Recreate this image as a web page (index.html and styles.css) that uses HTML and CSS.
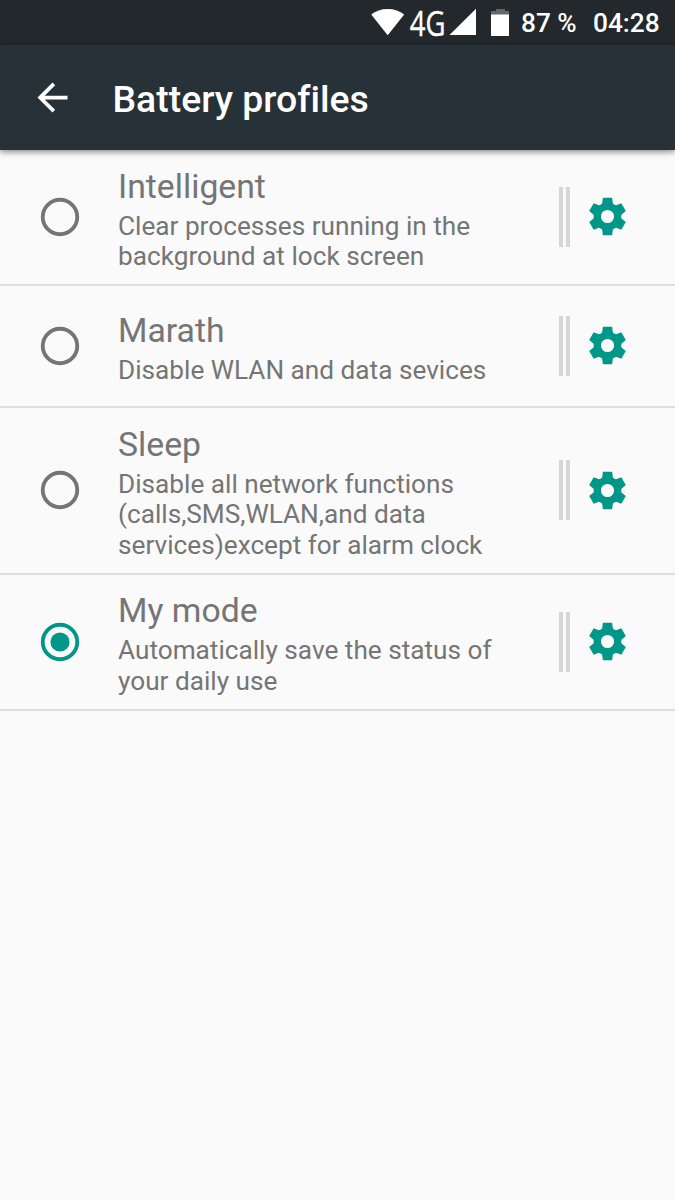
FILE: index.html
```html
<!DOCTYPE html>
<html lang="en">
<head>
    <meta charset="UTF-8">
    <meta name="viewport" content="width=device-width, initial-scale=1.0">
    <title>Battery profiles</title>
    <link rel="stylesheet" href="styles.css">
</head>
<body>
    <!-- Shared icons -->
    <svg class="icon-defs" width="0" height="0">
        <symbol id="gear" viewBox="-12 -12 24 24">
            <path fill-rule="evenodd" d="M-2.870-6.930L-2.450-10H2.450L2.870-6.930Q3.700-6.200 4.570-5.950L7.370-7.030 9.770-2.870 7.440-1Q7.200 0 7.440 1L9.770 2.870 7.370 7.030 4.570 5.950Q3.700 6.200 2.870 6.930L2.450 10H-2.450L-2.870 6.930Q-3.700 6.200-4.570 5.950L-7.370 7.030-9.770 2.870-7.440 1Q-7.200 0-7.440-1L-9.770-2.870-7.370-7.030-4.570-5.950Q-3.700-6.200-2.870-6.930ZM0-3.500A3.500 3.500 0 1 0 0 3.500A3.500 3.500 0 1 0 0-3.500Z"/>
        </symbol>
        <symbol id="radio-off" viewBox="0 0 24 24">
            <circle cx="12" cy="12" r="9" fill="none" stroke="currentColor" stroke-width="2"/>
        </symbol>
        <symbol id="radio-on" viewBox="0 0 24 24">
            <circle cx="12" cy="12" r="9" fill="none" stroke="currentColor" stroke-width="2"/>
            <circle cx="12" cy="12" r="5"/>
        </symbol>
    </svg>

    <div class="status-bar">
        <svg class="signal-icons" width="150" height="45" viewBox="0 0 150 45">
            <path d="M11.200 14.600Q18 9 27.700 9T44.200 14.600L27.700 35.300Z"/>
            <text class="network" transform="translate(49.800 35.500) scale(.785 1)">4G</text>
            <path d="M116 8.700V35H89.500Z"/>
            <path class="battery-empty" d="M136 9h9v2h4v4h-18v-4h5z"/>
            <path d="M131 14.500h18v21.500h-18z"/>
        </svg>
        <span class="battery">87 %</span>
        <span class="clock">04:28</span>
    </div>

    <div class="toolbar">
        <svg class="back" viewBox="0 0 24 24">
            <path d="M20 11H7.830l5.590-5.590L12 4l-8 8 8 8 1.410-1.410L7.830 13H20v-2z"/>
        </svg>
        <h1>Battery profiles</h1>
    </div>

    <div class="profiles">
        <div class="profile">
            <svg class="radio"><use href="#radio-off"/></svg>
            <div class="info">
                <div class="name">Intelligent</div>
                <div class="summary">Clear processes running in the<br>background at lock screen</div>
            </div>
            <div class="separator"></div>
            <svg class="settings"><use href="#gear"/></svg>
        </div>

        <div class="profile">
            <svg class="radio"><use href="#radio-off"/></svg>
            <div class="info">
                <div class="name">Marath</div>
                <div class="summary">Disable WLAN and data sevices</div>
            </div>
            <div class="separator"></div>
            <svg class="settings"><use href="#gear"/></svg>
        </div>

        <div class="profile">
            <svg class="radio"><use href="#radio-off"/></svg>
            <div class="info">
                <div class="name">Sleep</div>
                <div class="summary">Disable all network functions<br>(calls,SMS,WLAN,and data<br>services)except for alarm clock</div>
            </div>
            <div class="separator"></div>
            <svg class="settings"><use href="#gear"/></svg>
        </div>

        <div class="profile">
            <svg class="radio checked"><use href="#radio-on"/></svg>
            <div class="info">
                <div class="name">My mode</div>
                <div class="summary">Automatically save the status of<br>your daily use</div>
            </div>
            <div class="separator"></div>
            <svg class="settings"><use href="#gear"/></svg>
        </div>
    </div>
</body>
</html>
```
FILE: styles.css
```css
* {
    box-sizing: border-box;
}

body {
    margin: 0;
    min-height: 100vh;
    background-color: #fafafa;
    color: #757575;
    font-family: Roboto, sans-serif;
    font-variant-ligatures: none;
}

svg {
    display: block;
    flex: none;
    fill: currentColor;
}

.icon-defs {
    position: absolute;
}

/* Status bar */
.status-bar {
    display: flex;
    align-items: center;
    height: 45px;
    padding-left: 360px;
    background-color: #22282c;
    color: #fff;
    font-size: 26.25px;
    font-weight: 500;
    white-space: nowrap;
}

.signal-icons {
    overflow: visible;
}

.network {
    font-family: "Open Sans", sans-serif;
    font-size: 35px;
    font-weight: 400;
    stroke: #fff;
    stroke-width: 0.4;
}

.battery-empty {
    fill: #646869;
}

.battery {
    width: 72px;
    margin-left: 11px;
}

/* Toolbar */
.toolbar {
    display: flex;
    align-items: center;
    height: 105px;
    padding-left: 30px;
    background-color: #263238;
    color: #fff;
    box-shadow: 0 2px 6px rgba(0, 0, 0, 0.45);
}

.back {
    width: 45px;
    height: 45px;
}

.toolbar h1 {
    margin: 3px 0 0 37.5px;
    font-size: 37.4px;
    font-weight: 500;
}

/* Profile list */
.profile {
    display: flex;
    align-items: center;
    min-height: 122px;
    padding: 0 45px 0 37px;
    border-bottom: 2px solid #dedede;
}

.radio {
    width: 46px;
    height: 46px;
}

.checked {
    color: #009688;
}

.info {
    flex: 1;
    padding: 16.6px 0 11.8px 35px;
    white-space: nowrap;
}

.name {
    font-size: 33.75px;
    line-height: 39px;
}

.summary {
    margin-top: 5px;
    font-size: 26.2px;
    line-height: 30.8px;
}

.separator {
    width: 11px;
    height: 60px;
    border: solid #d6d6d6;
    border-width: 0 4px;
}

.settings {
    width: 45px;
    height: 45px;
    margin-left: 15px;
    color: #009688;
}
```
